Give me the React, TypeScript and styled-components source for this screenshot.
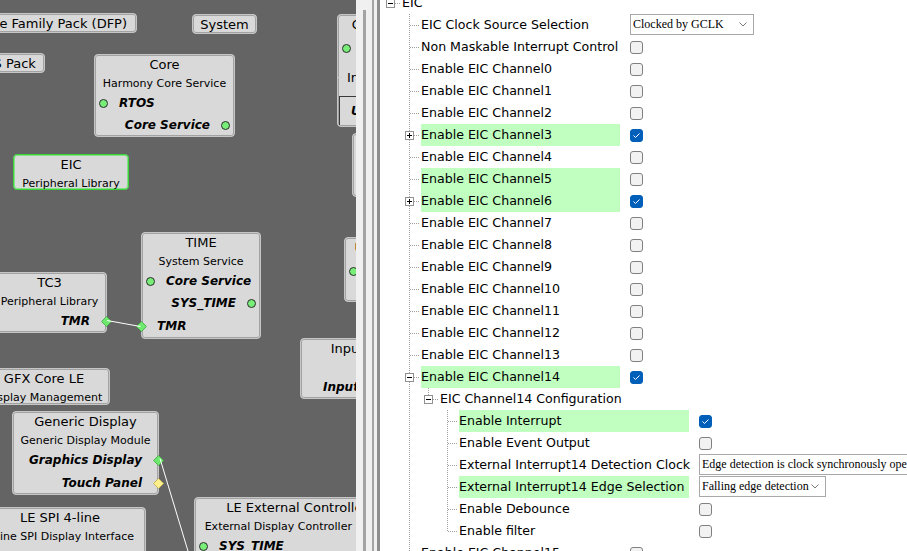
import React from "react";
import styled, { createGlobalStyle, css } from "styled-components";

const GlobalStyle = createGlobalStyle`
  html, body { margin: 0; padding: 0; background: #ffffff; overflow: hidden; }
  #root { width: 907px; height: 551px; }
  *, *::before, *::after { box-sizing: border-box; }
`;

const Screen = styled.div`
  display: flex;
  width: 907px;
  height: 551px;
  overflow: hidden;
  font-family: "DejaVu Sans", Tahoma, sans-serif;
  color: #000;
`;

/* ---------------- diagram canvas ---------------- */

const Canvas = styled.div`
  position: relative;
  flex: none;
  width: 356px;
  height: 100%;
  background: #646464;
  overflow: hidden;
`;

const NodeBox = styled.div<{
  $x: number;
  $y: number;
  $w: number;
  $h: number;
  $green?: boolean;
  $plain?: boolean;
}>`
  position: absolute;
  left: ${(p) => p.$x}px;
  top: ${(p) => p.$y}px;
  width: ${(p) => p.$w}px;
  height: ${(p) => p.$h}px;
  display: flex;
  flex-direction: column;
  justify-content: ${(p) => (p.$plain ? "center" : "flex-start")};
  padding-top: ${(p) => (p.$plain ? "1px" : "0")};
  background: #d9d9d9;
  border: 1px solid ${(p) => (p.$green ? "#3ad43a" : "#c6c6c6")};
  border-radius: 4px;
  box-shadow: inset 0 0 0 1px ${(p) => (p.$green ? "#86e086" : "#a2a2a2")};
  white-space: nowrap;
`;

const Title = styled.div`
  flex: none;
  margin-top: 1px;
  height: 18px;
  line-height: 18px;
  font-size: 13px;
  text-align: center;
`;

const PlainTitle = styled.div`
  flex: none;
  line-height: 16px;
  font-size: 13px;
  text-align: center;
`;

const Sub = styled.div`
  flex: none;
  margin-top: 1px;
  height: 17px;
  line-height: 18px;
  font-size: 11px;
  text-align: center;
`;

const Gap = styled.div<{ $h: number }>`
  flex: none;
  height: ${(p) => p.$h}px;
`;

const PortRow = styled.div<{ $side: "left" | "right" }>`
  flex: none;
  height: 22px;
  display: flex;
  align-items: center;
  justify-content: ${(p) => (p.$side === "left" ? "flex-start" : "flex-end")};
  gap: 11px;
  padding: 0 4px;
`;

const PortText = styled.span<{ $regular?: boolean; $indent?: number }>`
  font-size: ${(p) => (p.$regular ? "13px" : "12px")};
  font-weight: ${(p) => (p.$regular ? "normal" : "bold")};
  font-style: ${(p) => (p.$regular ? "normal" : "italic")};
  margin-left: ${(p) => p.$indent ?? 0}px;
`;

const Dot = styled.span`
  flex: none;
  width: 9px;
  height: 9px;
  border-radius: 50%;
  background: #78ee78;
  border: 1px solid #2c2c2c;
`;

const DiamondSvg = styled.svg<{ $side: "left" | "right" }>`
  flex: none;
  width: 11px;
  height: 11px;
  ${(p) =>
    p.$side === "left"
      ? css`
          margin-left: -10px;
          margin-right: -1px;
        `
      : css`
          margin-right: -10px;
          margin-left: 0px;
        `}
`;

const Tick = styled.span`
  flex: none;
  width: 5px;
  height: 1px;
  margin-left: -5px;
  margin-right: -6px;
  background: #cfcfcf;
`;

const Inset = styled.div`
  flex: none;
  height: 29px;
  margin-left: 1px;
  border-top: 1px solid #3a3a3a;
  border-left: 1px solid #3a3a3a;
  display: flex;
  align-items: center;
  padding-left: 11px;
  font-size: 12px;
  font-weight: bold;
  font-style: italic;
`;

const Wires = styled.svg`
  position: absolute;
  left: 0;
  top: 0;
  width: 356px;
  height: 551px;
  pointer-events: none;
`;

type Marker = "dot" | "green" | "yellow" | "none" | "tick";

function Diamond({ side, color }: { side: "left" | "right"; color: "green" | "yellow" }) {
  const fill = color === "green" ? "#6ee86e" : "#fdef8c";
  const stroke = color === "green" ? "#4db34d" : "#c9b65a";
  return (
    <DiamondSvg $side={side} viewBox="0 0 11 11">
      <polygon points="5.5,0.5 10.5,5.5 5.5,10.5 0.5,5.5" fill={fill} stroke={stroke} strokeWidth="1" />
    </DiamondSvg>
  );
}

function Port({
  side,
  marker,
  children,
  regular,
  indent,
}: {
  side: "left" | "right";
  marker: Marker;
  children: React.ReactNode;
  regular?: boolean;
  indent?: number;
}) {
  let m: React.ReactNode = null;
  if (marker === "dot") m = <Dot />;
  if (marker === "green") m = <Diamond side={side} color="green" />;
  if (marker === "yellow") m = <Diamond side={side} color="yellow" />;
  if (marker === "tick") m = <Tick />;
  const text = (
    <PortText $regular={regular} $indent={indent}>
      {children}
    </PortText>
  );
  return (
    <PortRow $side={side}>
      {side === "left" ? (
        <>
          {m}
          {text}
        </>
      ) : (
        <>
          {text}
          {m}
        </>
      )}
    </PortRow>
  );
}

function Diagram() {
  return (
    <Canvas>
      <NodeBox $x={-47} $y={13} $w={184} $h={20} $plain>
        <PlainTitle>Device Family Pack (DFP)</PlainTitle>
      </NodeBox>
      <NodeBox $x={192} $y={14} $w={65} $h={20} $plain>
        <PlainTitle>System</PlainTitle>
      </NodeBox>
      <NodeBox $x={-48} $y={53} $w={93} $h={20} $plain>
        <PlainTitle>CMSIS Pack</PlainTitle>
      </NodeBox>

      <NodeBox $x={94} $y={54} $w={141} $h={83}>
        <Title>Core</Title>
        <Sub>Harmony Core Service</Sub>
        <Port side="left" marker="dot">RTOS</Port>
        <Port side="right" marker="dot">Core Service</Port>
      </NodeBox>

      <NodeBox $x={13} $y={154} $w={116} $h={36} $green>
        <Title>EIC</Title>
        <Sub>Peripheral Library</Sub>
      </NodeBox>

      <NodeBox $x={337} $y={14} $w={81} $h={113}>
        <Title>Console</Title>
        <Gap $h={3} />
        <Port side="left" marker="dot">UART</Port>
        <Gap $h={7} />
        <Port side="left" marker="tick" regular>
          Input
        </Port>
        <Gap $h={8} />
        <Inset>USB</Inset>
      </NodeBox>

      <NodeBox $x={352} $y={133} $w={150} $h={64}>
        <Title>Touch</Title>
        <Sub>Touch Library</Sub>
      </NodeBox>

      <NodeBox $x={141} $y={232} $w={120} $h={107}>
        <Title>TIME</Title>
        <Sub>System Service</Sub>
        <Port side="left" marker="dot">Core Service</Port>
        <Port side="right" marker="dot">SYS_TIME</Port>
        <Gap $h={1} />
        <Port side="left" marker="green">TMR</Port>
      </NodeBox>

      <NodeBox $x={-8} $y={272} $w={115} $h={61}>
        <Title>TC3</Title>
        <Sub>Peripheral Library</Sub>
        <Port side="right" marker="green">TMR</Port>
      </NodeBox>

      <NodeBox $x={344} $y={237} $w={72} $h={65}>
        <Title>USART1</Title>
        <Gap $h={3} />
        <Port side="left" marker="dot">UART</Port>
      </NodeBox>

      <NodeBox $x={300} $y={338} $w={200} $h={61}>
        <Title>Input System Service</Title>
        <Sub>System Service</Sub>
        <Port side="left" marker="none" indent={18}>
          Input
        </Port>
      </NodeBox>

      <NodeBox $x={-22} $y={368} $w={132} $h={37}>
        <Title>GFX Core LE</Title>
        <Sub>Display Management</Sub>
      </NodeBox>

      <NodeBox $x={12} $y={411} $w={147} $h={84}>
        <Title>Generic Display</Title>
        <Sub>Generic Display Module</Sub>
        <Port side="right" marker="green">Graphics Display</Port>
        <Gap $h={1} />
        <Port side="right" marker="yellow">Touch Panel</Port>
      </NodeBox>

      <NodeBox $x={-26} $y={507} $w={172} $h={80}>
        <Title>LE SPI 4-line</Title>
        <Sub>4-line SPI Display Interface</Sub>
      </NodeBox>

      <NodeBox $x={194} $y={497} $w={206} $h={110}>
        <Title>LE External Controller</Title>
        <Sub>External Display Controller Driver</Sub>
        <Port side="left" marker="dot">SYS_TIME</Port>
      </NodeBox>

      <Wires viewBox="0 0 356 551">
        <line x1="107" y1="320.5" x2="140.5" y2="326.5" stroke="#ffffff" strokeWidth="1" />
        <line x1="160" y1="458.5" x2="190.7" y2="560" stroke="#ffffff" strokeWidth="1" />
      </Wires>
    </Canvas>
  );
}

/* ---------------- splitter ---------------- */

const Splitter = styled.div`
  flex: none;
  width: 24px;
  height: 100%;
  background: #f0f0f0;
  display: flex;
`;

const SplitLine = styled.div<{ $ml: number; $w: number; $top?: number; $c: string }>`
  flex: none;
  margin-left: ${(p) => p.$ml}px;
  width: ${(p) => p.$w}px;
  margin-top: ${(p) => p.$top ?? 0}px;
  background: ${(p) => p.$c};
`;

/* ---------------- property tree ---------------- */

const TreePanel = styled.div`
  flex: 1;
  height: 100%;
  background: #ffffff;
  overflow: hidden;
  padding-left: 1px;
`;

const TreeList = styled.div`
  display: flex;
  flex-direction: column;
  margin-top: -8px;
`;

const Row = styled.div`
  flex: none;
  display: flex;
  height: 22px;
`;

const dotsV = "repeating-linear-gradient(to bottom, #a0a0a0 0 1px, transparent 1px 2px)";
const dotsH = "repeating-linear-gradient(to right, #a0a0a0 0 1px, transparent 1px 2px)";

const Cell = styled.div<{ $v: "none" | "full" | "half"; $h?: boolean }>`
  position: relative;
  flex: none;
  width: 19px;
  height: 22px;

  &::before {
    content: "";
    position: absolute;
    left: 9px;
    top: 0;
    width: 1px;
    height: ${(p) => (p.$v === "half" ? "12px" : "22px")};
    background-image: ${dotsV};
    display: ${(p) => (p.$v === "none" ? "none" : "block")};
  }

  &::after {
    content: "";
    position: absolute;
    left: 10px;
    top: 11px;
    width: 10px;
    height: 1px;
    background-image: ${dotsH};
    display: ${(p) => (p.$h ? "block" : "none")};
  }
`;

const Expander = styled.span<{ $open: boolean }>`
  position: absolute;
  z-index: 1;
  left: 5px;
  top: 7px;
  width: 9px;
  height: 9px;
  border: 1px solid #919191;
  background: #ffffff;

  &::before {
    content: "";
    position: absolute;
    left: 1px;
    top: 3px;
    width: 5px;
    height: 1px;
    background: #000;
  }

  &::after {
    content: "";
    position: absolute;
    left: 3px;
    top: 1px;
    width: 1px;
    height: 5px;
    background: #000;
    display: ${(p) => (p.$open ? "none" : "block")};
  }
`;

const Label = styled.div<{ $w?: number; $hl?: boolean }>`
  flex: none;
  margin-left: 2px;
  width: ${(p) => (p.$w ? `${p.$w}px` : "auto")};
  height: 22px;
  line-height: 22px;
  font-size: 12.6px;
  white-space: nowrap;
  background: ${(p) => (p.$hl ? "#c0ffc0" : "transparent")};
`;

const ValueCell = styled.div`
  flex: none;
  margin-left: 10px;
  height: 22px;
  display: flex;
  align-items: center;
`;

const CheckBox = styled.span<{ $on: boolean }>`
  flex: none;
  width: 13px;
  height: 13px;
  border-radius: 3px;
  display: flex;
  align-items: center;
  justify-content: center;
  ${(p) =>
    p.$on
      ? css`
          background: #005fb8;
          border: 1px solid #005fb8;
        `
      : css`
          background: #f2f2f2;
          border: 1px solid #808080;
        `}
`;

const Select = styled.div<{ $w: number }>`
  flex: none;
  align-self: flex-start;
  width: ${(p) => p.$w}px;
  height: 21px;
  border: 1px solid #a8a8a8;
  background: #ffffff;
  display: flex;
  align-items: center;
  padding-left: 2px;
  font-family: "Liberation Serif", serif;
  font-size: 12px;
  white-space: nowrap;
  overflow: hidden;
`;

const Chevron = styled.svg`
  flex: none;
  margin-left: auto;
  margin-right: 6px;
  width: 8px;
  height: 5px;
`;

type Value =
  | { kind: "check"; on: boolean }
  | { kind: "select"; text: string; w: number; arrow: boolean };

type RowDef = {
  label: string;
  depth: number;
  guides: boolean[];
  conn: "none" | "full" | "half";
  exp?: "plus" | "minus";
  hl?: boolean;
  w?: number;
  value?: Value;
};

const L1W = 199;
const L3W = 230;

const channel = (n: number, extra: Partial<RowDef> = {}): RowDef => ({
  label: `Enable EIC Channel${n}`,
  depth: 1,
  guides: [false],
  conn: "full",
  w: L1W,
  value: { kind: "check", on: false },
  ...extra,
});

const sub3 = (label: string, value: Value, extra: Partial<RowDef> = {}): RowDef => ({
  label,
  depth: 3,
  guides: [false, true, false],
  conn: "full",
  w: L3W,
  value,
  ...extra,
});

const off: Value = { kind: "check", on: false };
const on: Value = { kind: "check", on: true };

const rows: RowDef[] = [
  { label: "EIC", depth: 0, guides: [], conn: "none", exp: "minus" },
  {
    label: "EIC Clock Source Selection",
    depth: 1,
    guides: [false],
    conn: "full",
    w: L1W,
    value: { kind: "select", text: "Clocked by GCLK", w: 124, arrow: true },
  },
  {
    label: "Non Maskable Interrupt Control",
    depth: 1,
    guides: [false],
    conn: "full",
    w: L1W,
    value: off,
  },
  channel(0),
  channel(1),
  channel(2),
  channel(3, { exp: "plus", hl: true, value: on }),
  channel(4),
  channel(5, { hl: true }),
  channel(6, { exp: "plus", hl: true, value: on }),
  channel(7),
  channel(8),
  channel(9),
  channel(10),
  channel(11),
  channel(12),
  channel(13),
  channel(14, { exp: "minus", hl: true, value: on }),
  {
    label: "EIC Channel14 Configuration",
    depth: 2,
    guides: [false, true],
    conn: "half",
    exp: "minus",
  },
  sub3("Enable Interrupt", on, { hl: true }),
  sub3("Enable Event Output", off),
  sub3("External Interrupt14 Detection Clock", {
    kind: "select",
    text: "Edge detection is clock synchronously operated",
    w: 280,
    arrow: true,
  }),
  sub3(
    "External Interrupt14 Edge Selection",
    { kind: "select", text: "Falling edge detection", w: 127, arrow: true },
    { hl: true }
  ),
  sub3("Enable Debounce", off),
  sub3("Enable filter", off, { conn: "half" }),
  channel(15),
];

function ValueView({ v }: { v: Value }) {
  if (v.kind === "check") {
    return (
      <CheckBox $on={v.on}>
        {v.on && (
          <svg width="9" height="9" viewBox="0 0 9 9">
            <polyline points="1.5,4.5 3.5,6.5 7.5,2.5" fill="none" stroke="#ffffff" strokeWidth="1" />
          </svg>
        )}
      </CheckBox>
    );
  }
  return (
    <Select $w={v.w}>
      <span>{v.text}</span>
      {v.arrow && (
        <Chevron viewBox="0 0 8 5">
          <polyline points="0.5,0.5 4,4 7.5,0.5" fill="none" stroke="#7a7a7a" strokeWidth="1" />
        </Chevron>
      )}
    </Select>
  );
}

function PropertyTree() {
  return (
    <TreePanel>
      <TreeList>
        {rows.map((r, i) => (
          <Row key={i}>
            {r.guides.map((g, j) => (
              <Cell key={j} $v={g ? "full" : "none"} />
            ))}
            <Cell $v={r.conn} $h>
              {r.exp && <Expander $open={r.exp === "minus"} />}
            </Cell>
            <Label $w={r.w} $hl={r.hl}>
              {r.label}
            </Label>
            {r.value && (
              <ValueCell>
                <ValueView v={r.value} />
              </ValueCell>
            )}
          </Row>
        ))}
      </TreeList>
    </TreePanel>
  );
}

export default function App() {
  return (
    <>
      <GlobalStyle />
      <Screen>
        <Diagram />
        <Splitter>
          <SplitLine $ml={7} $w={3} $top={10} $c="#a3a3a3" />
          <SplitLine $ml={6} $w={2} $c="#a3a3a3" />
          <SplitLine $ml={3} $w={3} $c="#8e8e8e" />
        </Splitter>
        <PropertyTree />
      </Screen>
    </>
  );
}
